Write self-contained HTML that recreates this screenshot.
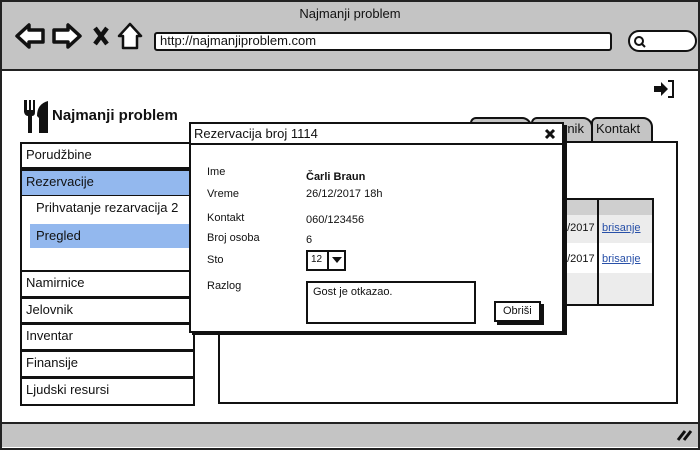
<!DOCTYPE html>
<html><head><meta charset="utf-8"><style>
*{box-sizing:border-box;margin:0;padding:0}
body{width:700px;height:450px;overflow:hidden;background:#fff;font-family:"Liberation Sans",sans-serif;font-size:12px;color:#111;position:relative}
.a{position:absolute}
.b{border:2px solid #111}
.t{position:absolute;white-space:nowrap}
.nav{position:absolute;left:20px;width:175px;border:2px solid #111;background:#fff;padding-left:4px;font-size:13px;line-height:22px}
</style></head><body>
<div class="a" style="left:0;top:0;width:700px;height:450px;border:2px solid #222"></div>
<div class="a" style="left:2px;top:2px;width:696px;height:69px;background:#c4c4c4;border-bottom:2px solid #222"></div>
<div class="t" style="left:0;width:700px;text-align:center;top:6px;font-size:13px">Najmanji problem</div>
<svg class="a" style="left:14px;top:21px" width="135" height="32" viewBox="0 0 135 30">
<path d="M3 14 L15 3 L15 8 L29 8 L29 20 L15 20 L15 25 Z" fill="#fff" stroke="#111" stroke-width="3.5" stroke-linejoin="round"/>
<path d="M66 14 L54 3 L54 8 L40 8 L40 20 L54 20 L54 25 Z" fill="#fff" stroke="#111" stroke-width="3.5" stroke-linejoin="round"/>
<path d="M81 6 L93 22 M93 6 L81 22" stroke="#111" stroke-width="4.5"/>
<path d="M105 14 L116 2 L127 14 L123 14 L123 26 L109 26 L109 14 Z" fill="#fff" stroke="#111" stroke-width="2.5" stroke-linejoin="round"/>
</svg>
<div class="a" style="left:154px;top:32px;width:458px;height:19px;background:#fff;border:2px solid #111;border-radius:3px"></div>
<div class="t" style="left:160px;top:33px;font-size:13px">http://najmanjiproblem.com</div>
<div class="a" style="left:628px;top:30px;width:69px;height:22px;background:#fff;border:2px solid #111;border-radius:11px"></div>
<svg class="a" style="left:632px;top:34px" width="16" height="16"><circle cx="7" cy="7" r="4" fill="none" stroke="#111" stroke-width="2"/><path d="M9 9 L13 13" stroke="#111" stroke-width="2"/></svg>
<div class="a" style="left:2px;top:422px;width:696px;height:25px;background:#c4c4c4;border-top:2px solid #222"></div>
<svg class="a" style="left:676px;top:428px" width="18" height="14"><path d="M2 12 L9 3 M8 12 L15 3" stroke="#111" stroke-width="3"/></svg>
<svg class="a" style="left:653px;top:79px" width="24" height="20"><path d="M1 7 L8 7 L8 3 L15 10 L8 17 L8 13 L1 13 Z" fill="#111"/><path d="M15 2 L20 2 L20 18 L15 18" fill="none" stroke="#111" stroke-width="2"/></svg>
<svg class="a" style="left:23px;top:100px" width="26" height="33"><path d="M1 0 L1 12 Q2 16 5 16 L5 33 L9 33 L9 16 Q12 16 12 12 L12 0 L10 0 L10 10 L8 10 L8 0 L6 0 L6 10 L4 10 L4 0 Z" fill="#111"/><path d="M16 33 L16 18 L14 16 Q14 4 25 1 L25 33 Z" fill="#111"/></svg>
<div class="t" style="left:52px;top:107px;font-size:15px;font-weight:bold">Najmanji problem</div>
<!-- tabs -->
<div class="a b" style="left:470px;top:117px;width:62px;height:26px;background:#c4c4c4;border-radius:6px 10px 0 0"></div>
<div class="a b" style="left:531px;top:117px;width:62px;height:26px;background:#c4c4c4;border-radius:6px 10px 0 0"></div>
<div class="a b" style="left:591px;top:117px;width:62px;height:26px;background:#c4c4c4;border-radius:6px 10px 0 0"></div>
<div class="t" style="left:596px;top:121px;font-size:13px">Kontakt</div>
<div class="t" style="left:563px;top:121px;font-size:13px">rnik</div>
<div class="a b" style="left:218px;top:141px;width:460px;height:263px;background:#fff"></div>
<!-- table -->
<div class="a b" style="left:505px;top:198px;width:149px;height:108px;background:#ececec"></div>
<div class="a" style="left:507px;top:200px;width:145px;height:15px;background:#cfcfcf"></div>
<div class="a" style="left:507px;top:243px;width:145px;height:30px;background:#fff"></div>
<div class="a" style="left:597px;top:198px;width:2px;height:108px;background:#111"></div>
<div class="t" style="left:561px;top:222px;font-size:11px">1/2017</div>
<div class="t" style="left:602px;top:222px;font-size:11px;color:#2850a8;text-decoration:underline">brisanje</div>
<div class="t" style="left:561px;top:253px;font-size:11px">1/2017</div>
<div class="t" style="left:602px;top:253px;font-size:11px;color:#2850a8;text-decoration:underline">brisanje</div>
<!-- sidebar -->
<div class="nav" style="top:142px;height:27px">Porudžbine</div>
<div class="nav" style="top:169px;height:28px;background:#93b8ee">Rezervacije</div>
<div class="a" style="left:20px;top:196px;width:175px;height:76px;border-left:2px solid #111;border-right:2px solid #111;background:#fff"></div>
<div class="t" style="left:36px;top:200px;font-size:13px">Prihvatanje rezarvacija 2</div>
<div class="a" style="left:30px;top:224px;width:165px;height:24px;background:#93b8ee"></div>
<div class="t" style="left:36px;top:228px;font-size:13px">Pregled</div>
<div class="nav" style="top:270px;height:28px">Namirnice</div>
<div class="nav" style="top:297px;height:27px">Jelovnik</div>
<div class="nav" style="top:323px;height:28px">Inventar</div>
<div class="nav" style="top:350px;height:28px">Finansije</div>
<div class="nav" style="top:377px;height:29px">Ljudski resursi</div>
<!-- dialog -->
<div class="a" style="left:192px;top:125px;width:375px;height:210px;background:#111"></div>
<div class="a b" style="left:189px;top:122px;width:375px;height:211px;background:#fff"></div>
<div class="a" style="left:189px;top:143px;width:375px;height:2px;background:#111"></div>
<div class="t" style="left:194px;top:126px;font-size:13px">Rezervacija broj 1114</div>
<svg class="a" style="left:544px;top:128px" width="12" height="12"><path d="M2 2 L10 10 M10 2 L2 10" stroke="#111" stroke-width="3"/></svg>
<div class="t" style="left:207px;top:166px;font-size:11px">Ime</div>
<div class="t" style="left:306px;top:171px;font-size:11px;font-weight:bold">Čarli Braun</div>
<div class="t" style="left:207px;top:188px;font-size:11px">Vreme</div>
<div class="t" style="left:306px;top:188px;font-size:11px">26/12/2017 18h</div>
<div class="t" style="left:207px;top:212px;font-size:11px">Kontakt</div>
<div class="t" style="left:306px;top:214px;font-size:11px">060/123456</div>
<div class="t" style="left:207px;top:232px;font-size:11px">Broj osoba</div>
<div class="t" style="left:306px;top:234px;font-size:11px">6</div>
<div class="t" style="left:207px;top:254px;font-size:11px">Sto</div>
<div class="a b" style="left:306px;top:250px;width:40px;height:21px;background:#fff"></div>
<div class="a" style="left:327px;top:250px;width:2px;height:21px;background:#111"></div>
<div class="t" style="left:311px;top:254px;font-size:10px">12</div>
<svg class="a" style="left:331px;top:256px" width="12" height="8"><path d="M1 1 L11 1 L6 7 Z" fill="#111"/></svg>
<div class="t" style="left:207px;top:280px;font-size:11px">Razlog</div>
<div class="a b" style="left:306px;top:281px;width:170px;height:43px;background:#fff"></div>
<div class="t" style="left:313px;top:286px;font-size:11px">Gost je otkazao.</div>
<div class="a" style="left:497px;top:304px;width:47px;height:21px;background:#111"></div>
<div class="a b" style="left:494px;top:301px;width:47px;height:21px;background:#fff"></div>
<div class="t" style="left:503px;top:305px;font-size:11px">Obriši</div>
</body></html>
